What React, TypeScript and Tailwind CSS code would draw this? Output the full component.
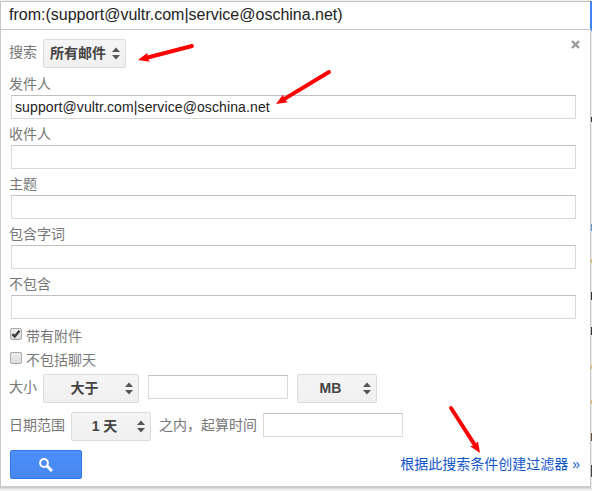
import React from "react";

const cjk = "font-['Liberation_Sans','Noto_Sans_CJK_SC',sans-serif]";

function Sorter({ className = "" }: { className?: string }) {
  return (
    <svg width="8" height="13" viewBox="0 0 8 13" fill="#555" className={`shrink-0 ${className}`}>
      <path d="M4 0.5L8 5H0z M4 12.5L8 8H0z" />
    </svg>
  );
}

function Select({ label, className }: { label: string; className: string }) {
  return (
    <button
      className={`flex h-[29px] shrink-0 items-center rounded-[2px] border border-[#dcdcdc] bg-linear-to-b from-[#f5f5f5] to-[#f0f0f0] pr-[5px] text-sm leading-5 font-bold text-[#444] ${className}`}
    >
      <span className="flex-1 pb-px text-center whitespace-nowrap">{label}</span>
      <Sorter />
    </button>
  );
}

const inputStyle =
  "block h-6 shrink-0 border border-[#d9d9d9] border-t-[#c0c0c0] bg-white px-[3px] text-sm tracking-[0.11px] text-[#222] outline-none";

function Field({ label, value = "" }: { label: string; value?: string }) {
  return (
    <div className="h-[50px]">
      <div className="h-[21px] leading-[21px]">{label}</div>
      <input className={`${inputStyle} ml-[2px] w-[565px]`} defaultValue={value} />
    </div>
  );
}

function Check({ label, checked = false }: { label: string; checked?: boolean }) {
  return (
    <label className="flex h-6 items-start pl-px">
      <span className="mt-px flex h-3 w-3 shrink-0 rounded-[2px] border border-[#aaa] bg-linear-to-b from-[#eee] to-[#dcdcdc]">
        {checked && (
          <svg width="10" height="10" viewBox="0 0 10 10" fill="none" stroke="#3c3c3c" strokeWidth="2.4">
            <path d="M1.4 5.2L3.7 7.5L8.5 1.8" />
          </svg>
        )}
      </span>
      <span className="ml-1 leading-[19px]">{label}</span>
    </label>
  );
}

function Arrow({ x1, y1, x2, y2 }: { x1: number; y1: number; x2: number; y2: number }) {
  const length = Math.hypot(x2 - x1, y2 - y1);
  const angle = (Math.atan2(y2 - y1, x2 - x1) * 180) / Math.PI;
  return (
    <g transform={`translate(${x1} ${y1}) rotate(${angle})`}>
      <path d={`M0 0H${length - 7}`} stroke="#f00" strokeWidth="3.9" strokeLinecap="round" />
      <path d={`M${length} 0l-11 -4.6l1.5 4.6l-1.5 4.6z`} fill="#f00" />
    </g>
  );
}

export default function App() {
  return (
    <div className={`relative flex h-[491px] w-[592px] flex-col overflow-hidden bg-[#eee] pt-px ${cjk} text-sm text-[#777]`}>
      <div className="flex h-7 shrink-0">
        <header className="w-[590px] border-t border-l border-[#c6c6c6] bg-white pl-2 text-base leading-[26px] text-[#222]">
          from:(support@vultr.com|service@oschina.net)
        </header>
        <div className="w-[2px] bg-[#4285f4]" />
      </div>
      <div className="flex h-[457px] shrink-0">
        <main className="w-[591px] shrink-0 border-t border-r border-l border-[#c8c8c8] bg-white">
          <section className="pl-2">
            <div className="flex h-11 items-start pt-[9px]">
              <span className="w-[34px] leading-[27px]">搜索</span>
              <Select label="所有邮件" className="w-[83px]" />
              <button aria-label="关闭" className="mt-[1px] mr-[10px] ml-auto">
                <svg width="9" height="9" viewBox="0 0 9 9" fill="none" stroke="#999" strokeWidth="2.4">
                  <path d="M1 1L8 8M8 1L1 8" />
                </svg>
              </button>
            </div>
            <Field label="发件人" value="support@vultr.com|service@oschina.net" />
            <Field label="收件人" />
            <Field label="主题" />
            <Field label="包含字词" />
            <Field label="不包含" />
            <div className="pt-[3px]">
              <Check label="带有附件" checked />
              <Check label="不包括聊天" />
            </div>
            <div className="mt-[-1px] flex h-[38px] items-start">
              <span className="w-[34px] shrink-0 leading-[27px]">大小</span>
              <Select label="大于" className="w-24" />
              <input className={`${inputStyle} mt-px ml-[9px] w-[140px]`} />
              <Select label="MB" className="ml-[9px] w-20" />
            </div>
            <div className="flex h-[38px] items-start">
              <span className="w-[62px] shrink-0 leading-[27px]">日期范围</span>
              <Select label="1 天" className="w-20" />
              <span className="ml-2 w-[104px] shrink-0 leading-[27px]">之内，起算时间</span>
              <input className={`${inputStyle} mt-px w-[140px]`} />
            </div>
            <div className="flex items-center pl-px">
              <button
                aria-label="搜索"
                className="flex h-[29px] w-[72px] items-center justify-center rounded-[2px] border border-[#3079ed] bg-linear-to-b from-[#4d90fe] to-[#4787ed]"
              >
                <svg width="14" height="14" viewBox="0 0 14 14" fill="none" stroke="white">
                  <circle cx="5" cy="5" r="3.9" strokeWidth="2" />
                  <path d="M8 8L13 13" strokeWidth="3" />
                </svg>
              </button>
              <a href="#" className="mr-[10px] ml-auto pb-0.5 text-[#15c]">
                根据此搜索条件创建过滤器 »
              </a>
            </div>
          </section>
        </main>
        <aside className="flex w-px flex-col bg-[#ececec]">
          <div className="h-[2px] bg-[#4285f4]" />
          <div className="mt-[86px] h-[5px] bg-[#26384a]" />
          <div className="mt-[102px] h-[7px] bg-[#5a9bc4]" />
          <div className="mt-[28px] h-1 bg-[#dfb96c]" />
          <div className="mt-[29px] h-2 bg-[#333]" />
          <div className="mt-[27px] h-2 bg-[#333]" />
          <div className="mt-[30px] h-1 bg-[#dfb96c]" />
          <div className="mt-[31px] h-1 bg-[#dfb96c]" />
          <div className="mt-[29px] h-2 bg-[#5d4d38]" />
          <div className="mt-[24px] h-3 bg-[#444]" />
        </aside>
      </div>
      <div className="h-[2px] w-[591px] shrink-0 bg-[#ccc]" />
      <div className="h-px shrink-0 bg-[#dedede]" />
      <svg width="592" height="491" viewBox="0 0 592 491" className="pointer-events-none absolute inset-0">
        <Arrow x1={192} y1={46} x2={138} y2={60} />
        <Arrow x1={329} y1={72} x2={276} y2={104} />
        <Arrow x1={451} y1={408} x2={480} y2={453} />
      </svg>
    </div>
  );
}
